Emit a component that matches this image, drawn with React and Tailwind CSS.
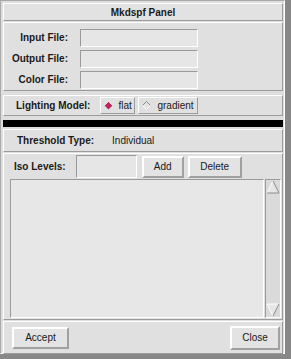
import React from "react";

const raised = "border border-t-white border-l-white border-b-[#9c9c9c] border-r-[#9c9c9c]";
const sunken = "border border-t-[#9a9a9a] border-l-[#9a9a9a] border-b-white border-r-white";

function Field({ label }) {
  return (
    <div className="flex items-center h-[21px]">
      <div className="w-[64px] text-right font-bold">{label}</div>
      <div className={`ml-[12px] w-[118px] h-[18px] bg-[#e6e6e6] ${sunken}`} />
    </div>
  );
}

function Btn({ children, className = "" }) {
  return (
    <div className={`flex items-center justify-center bg-[#e3e3e3] border-2 border-t-white border-l-white border-b-[#a0a0a0] border-r-[#a0a0a0] ${className}`}>
      {children}
    </div>
  );
}

export default function App() {
  return (
    <div className="w-[291px] h-[359px] bg-[#878787] overflow-hidden" style={{ fontFamily: '"Liberation Sans", Arial, sans-serif' }}>
      <div className="w-[285px] h-[354px] bg-[#dedede] border border-t-[#a8a8a8] border-l-[#a8a8a8] border-b-white border-r-white pl-[2px] pt-[2px] pr-[1px] flex flex-col text-[10px] text-[#1a1a1a]">
        <div className={`h-[18px] shrink-0 bg-[#e2e2e2] ${raised} flex items-center justify-center font-bold`}>Mkdspf Panel</div>
        <div className={`mt-[1px] h-[69px] shrink-0 ${raised} bg-[#e0e0e0] flex flex-col pt-[4px]`}>
          <Field label="Input File:" />
          <Field label="Output File:" />
          <Field label="Color File:" />
        </div>
        <div className={`mt-[4px] h-[21px] shrink-0 ${raised} bg-[#e0e0e0] flex items-center pl-[12px]`}>
          <span className="font-bold">Lighting Model:</span>
          <div className={`ml-[10px] h-[17px] w-[35px] ${raised} flex items-center pl-[3px]`}>
            <svg width="9" height="9" viewBox="0 0 9 9">
              <polygon points="4.5,0.5 8.5,4.5 4.5,8.5 0.5,4.5" fill="#b8285e" />
              <polyline points="0.5,4.5 4.5,0.5 8.5,4.5" fill="none" stroke="#f4f4f4" strokeWidth="0.8" />
            </svg>
            <span className="ml-[5px]">flat</span>
          </div>
          <div className={`ml-[3px] h-[17px] w-[60px] ${raised} flex items-center pl-[3px]`}>
            <svg width="9" height="9" viewBox="0 0 9 9">
              <polygon points="4.5,0.5 8.5,4.5 4.5,8.5 0.5,4.5" fill="#e4e4e4" />
              <polyline points="0.5,4.5 4.5,0.5 8.5,4.5" fill="none" stroke="#8a8a8a" strokeWidth="1" />
              <polyline points="0.5,4.5 4.5,8.5 8.5,4.5" fill="none" stroke="#ffffff" strokeWidth="1" />
            </svg>
            <span className="ml-[6px]">gradient</span>
          </div>
        </div>
        <div className="mt-[4px] h-[7px] shrink-0 bg-black" />
        <div className={`mt-[2px] h-[23px] shrink-0 ${raised} bg-[#e0e0e0] flex items-center pl-[13px]`}>
          <span className="font-bold">Threshold Type:</span>
          <span className="ml-[18px]">Individual</span>
        </div>
        <div className={`mt-[1px] h-[167px] shrink-0 ${raised} bg-[#e0e0e0] flex flex-col`}>
          <div className="flex items-center h-[23px] mt-[1px] pl-[10px]">
            <span className="font-bold">Iso Levels:</span>
            <div className={`ml-[10px] w-[61px] h-[23px] bg-[#e6e6e6] ${sunken}`} />
            <Btn className="ml-[5px] w-[42px] h-[22px]">Add</Btn>
            <Btn className="ml-[4px] w-[54px] h-[22px]">Delete</Btn>
          </div>
          <div className="flex ml-[6px] mt-[1px] h-[139px] w-[271px]">
            <div className={`flex-1 bg-[#e7e7e7] ${sunken}`} />
            <div className={`ml-[1px] w-[16px] bg-[#dadada] ${sunken} flex flex-col justify-between`}>
              <svg width="14" height="14" viewBox="0 0 14 14">
                <polygon points="7,1 13,13 1,13" fill="#e6e6e6" />
                <polyline points="1,13 7,1" fill="none" stroke="#ffffff" strokeWidth="1" />
                <polyline points="7,1 13,13 1,13" fill="none" stroke="#8c8c8c" strokeWidth="1" />
              </svg>
              <svg width="14" height="14" viewBox="0 0 14 14">
                <polygon points="1,1 13,1 7,13" fill="#e6e6e6" />
                <polyline points="7,13 1,1 13,1" fill="none" stroke="#ffffff" strokeWidth="1" />
                <polyline points="13,1 7,13" fill="none" stroke="#8c8c8c" strokeWidth="1" />
              </svg>
            </div>
          </div>
        </div>
        <div className={`mt-[1px] h-[33px] shrink-0 ${raised} bg-[#e0e0e0] flex items-center justify-between pl-[8px] pr-[2px]`}>
          <Btn className="w-[57px] h-[22px]">Accept</Btn>
          <Btn className="w-[50px] h-[24px]">Close</Btn>
        </div>
      </div>
    </div>
  );
}
